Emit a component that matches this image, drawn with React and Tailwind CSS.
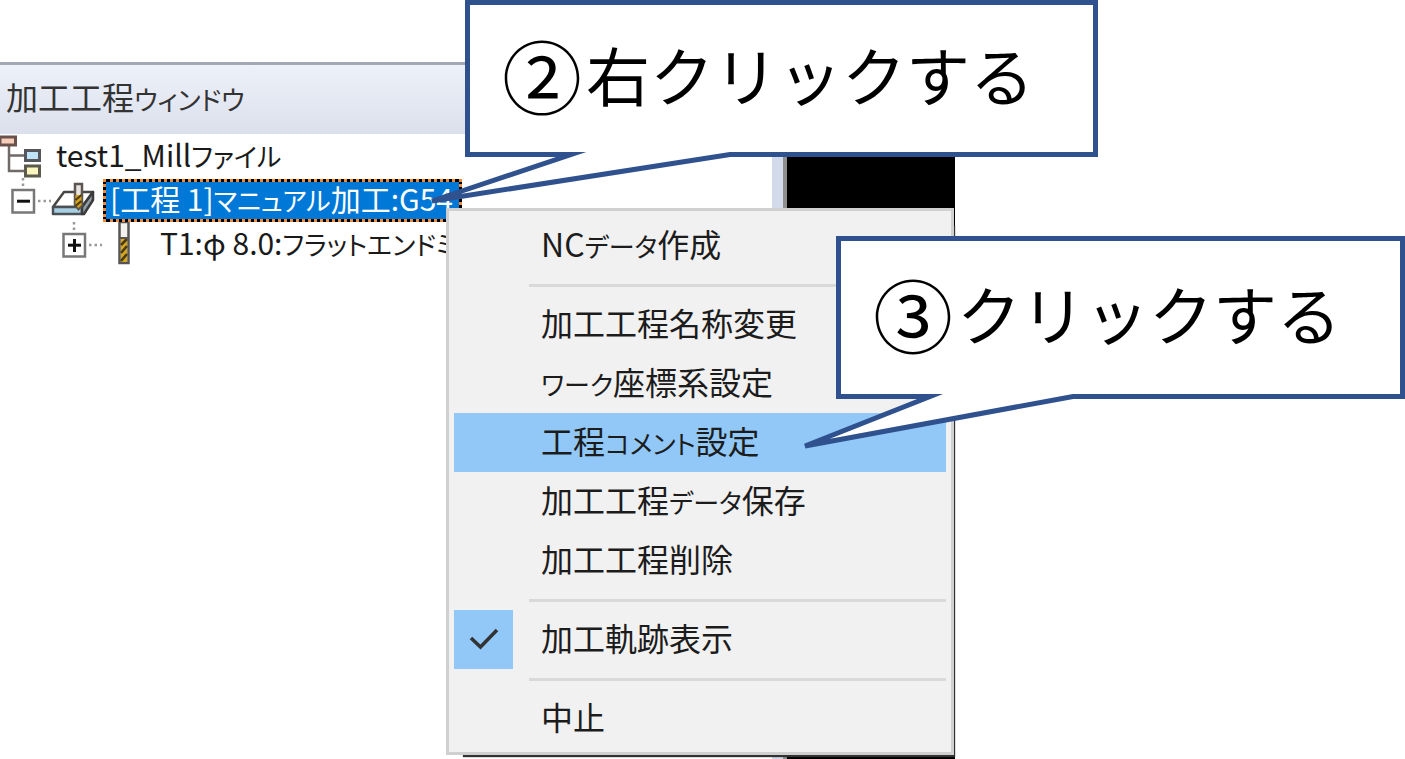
import React from 'react';

const menuGroups = [
  [{ label: 'NCデータ作成' }],
  [
    { label: '加工工程名称変更' },
    { label: 'ワーク座標系設定' },
    { label: '工程コメント設定', active: true },
    { label: '加工工程データ保存' },
    { label: '加工工程削除' },
  ],
  [{ label: '加工軌跡表示', checked: true }],
  [{ label: '中止' }],
];

// Katakana runs are set a little smaller than kanji, as in the Windows UI fonts
const Label = ({ children, kanaClass = 'text-[26px]' }) => (
  <span>
    {children.split(/([ァ-ヶー]+)/).map((run, index) =>
      index % 2 === 1 ? (
        <span key={index} className={kanaClass}>{run}</span>
      ) : (
        run
      )
    )}
  </span>
);

const ProjectIcon = () => (
  <svg className="w-[42px] h-11 shrink-0" viewBox="0 0 42 44" fill="none" aria-hidden="true">
    <path d="M9 12V37H26M9 21.5H26" stroke="#6f6a68" strokeWidth="2.5" />
    <rect x="0" y="3" width="15.5" height="8" fill="#f6cdbb" stroke="#6b514c" strokeWidth="3" />
    <rect x="25.5" y="16.5" width="14" height="10" fill="#bfe3f7" stroke="#56575c" strokeWidth="3" />
    <rect x="25.5" y="32" width="14" height="10" fill="#faf6bd" stroke="#5b5a4c" strokeWidth="3" />
  </svg>
);

const Expander = ({ open, label }) => (
  <button type="button" aria-label={label} className="w-10 h-11 shrink-0">
    <svg className="w-10 h-11" viewBox="0 0 40 44" fill="none" aria-hidden="true">
      <path d="M12 0V10" stroke="#999" strokeWidth="2.5" strokeDasharray="2.5 3" />
      <path d="M27 23H40" stroke="#999" strokeWidth="2.5" strokeDasharray="2.5 3" />
      <rect x="1.5" y="12" width="21.5" height="22.5" fill="#fff" stroke="#777" strokeWidth="2.5" />
      <path d="M6 23.2H19" stroke="#111" strokeWidth="3" />
      {!open && <path d="M12.5 17V30" stroke="#111" strokeWidth="3" />}
    </svg>
  </button>
);

const WorkpieceIcon = () => (
  <svg className="w-11 h-11 shrink-0" viewBox="0 0 44 44" fill="none" aria-hidden="true">
    <path d="M13 14H42L31 29H2Z" fill="#fff" stroke="#4a4644" strokeWidth="2.5" strokeLinejoin="round" />
    <path d="M2 29H31V36H2Z" fill="#a9cfe2" stroke="#4b5055" strokeWidth="2.5" strokeLinejoin="round" />
    <path d="M31 29L42 14V22L33 36H31Z" fill="#8d9da6" stroke="#3b3b3b" strokeWidth="2.5" strokeLinejoin="round" />
    <path d="M24 6H31V27L27.5 31L24 27Z" fill="#e7e4df" stroke="#5c5550" strokeWidth="2.5" />
    <path d="M24.5 17H30.5V27L27.5 30L24.5 27Z" fill="#d0a01e" />
    <path d="M24.5 22L30.5 17M24.5 28L30.5 23" stroke="#4d3b0b" strokeWidth="2" />
  </svg>
);

const EndMillIcon = () => (
  <svg className="w-4 h-11 shrink-0" viewBox="0 0 16 44" fill="none" aria-hidden="true">
    <rect x="3.5" y="0" width="9" height="41" fill="#f4f2ef" stroke="#555" strokeWidth="2.5" />
    <rect x="5" y="16" width="6" height="24" fill="#d6a61c" />
    <path d="M5 23L11 17M5 31L11 24M5 39L11 32" stroke="#4b3a08" strokeWidth="2.5" />
    <path d="M4 16H12" stroke="#555" strokeWidth="2" />
  </svg>
);

const ContextMenu = () => (
  <div
    role="menu"
    className="absolute left-[446px] top-[208px] w-[508px] border-[3px] border-[#d0d0d0] bg-[#f1f1f1] px-[5px] pt-[5px] pb-1 shadow-[9px_10px_1px_-8px_#333]"
  >
    {menuGroups.map((group, index) => (
      <div key={group[0].label} role="group">
        {index > 0 && (
          <div className="h-5 pl-[75px] flex items-center">
            <div className="h-[3px] w-full bg-[#d9d9d9]" />
          </div>
        )}
        {group.map((item) => (
          <button
            key={item.label}
            type="button"
            role={item.checked ? 'menuitemcheckbox' : 'menuitem'}
            aria-checked={item.checked}
            className={`flex h-[59px] w-full items-center text-left text-[32px] leading-none whitespace-nowrap text-[#1c1c1c] ${
              item.active ? 'bg-[#91c8f7]' : ''
            }`}
          >
            <span
              className={`mr-7 flex h-[59px] w-[59px] shrink-0 items-center justify-center ${
                item.checked ? 'bg-[#91c8f7]' : ''
              }`}
            >
              {item.checked && (
                <svg className="h-8 w-8" viewBox="0 0 32 32" fill="none" aria-hidden="true">
                  <path d="M3 14L12.5 23L29 6" stroke="#333" strokeWidth="3.5" />
                </svg>
              )}
            </span>
            <span className="pb-[6px]">
              <Label>{item.label}</Label>
            </span>
          </button>
        ))}
      </div>
    ))}
  </div>
);

const Callout = ({ number, text, className, children }) => (
  <div
    className={`absolute flex items-center gap-1 border-[5px] border-[#2f528f] bg-white pb-3 pl-8 whitespace-nowrap text-black [font-feature-settings:normal] ${className}`}
  >
    <span className="text-[80px] leading-none">{number}</span>
    <span className="text-[64px] leading-none">{text}</span>
    {children}
  </div>
);

const App = () => {
  return (
    <main className="relative min-h-screen overflow-hidden bg-white pt-[62px] font-['Noto_Sans_CJK_JP',sans-serif] [font-feature-settings:'palt']">
      {/* Application window */}
      <div className="flex w-[68%]">
        <section className="min-w-0 flex-1 overflow-hidden">
          <header className="flex h-[72px] items-center border-t-3 border-[#a4a8b4] bg-linear-to-b from-[#edf1f9] to-[#dce0ec] pb-2 pl-[6px]">
            <h1 className="text-[32px] leading-none font-normal whitespace-nowrap text-[#333]">
              <Label>加工工程ウィンドウ</Label>
            </h1>
          </header>
          <ul className="text-[30px] leading-none whitespace-nowrap text-[#1a1a1a]">
            <li className="flex h-11 items-center gap-[14px]">
              <ProjectIcon />
              <span className="pb-1">
                <Label>test1_Millファイル</Label>
              </span>
            </li>
            <li className="flex h-11 items-center pl-[11px]">
              <Expander open label="工程を折りたたむ" />
              <WorkpieceIcon />
              <span className="ml-2 bg-black">
                <span className="flex h-[43px] w-[359px] items-center border-[3px] border-dotted border-[#f08a3c] bg-[#0078d7] bg-clip-padding pb-1 pl-1 text-white">
                  <Label>[工程 1]マニュアル加工:G54</Label>
                </span>
              </span>
            </li>
            <li className="flex h-11 items-center pl-[62px]">
              <Expander label="工具を展開" />
              <span className="ml-[14px] flex items-center gap-7">
                <EndMillIcon />
                <span className="pb-1">
                  <Label>T1:φ 8.0:フラットエンドミル</Label>
                </span>
              </span>
            </li>
          </ul>
        </section>
        <div className="w-[15px] border-r-4 border-[#8f8f8f] bg-[#d3daea]" />
        <div className="min-h-[697px] w-[168px] bg-black" />
      </div>

      <ContextMenu />

      <Callout number="②" text="右クリックする" className="left-[465px] top-0 h-[157px] w-[633px]">
        <svg className="absolute -left-[45px] top-[140px] h-[70px] w-[360px]" viewBox="425 145 360 70" fill="none" aria-hidden="true">
          <path d="M571 150H730V154.5L432 201L571 154.5Z" fill="#fff" />
          <path d="M540 154.5H571L432 201L730 154.5H760" stroke="#2f528f" strokeWidth="5" strokeMiterlimit="8" />
        </svg>
      </Callout>

      <Callout number="③" text="クリックする" className="left-[836px] top-[236px] h-[163px] w-[569px]">
        <svg className="absolute -left-[41px] top-[149px] h-[70px] w-[340px]" viewBox="800 390 340 70" fill="none" aria-hidden="true">
          <path d="M930 392H1073V396.5L805 446L930 396.5Z" fill="#fff" />
          <path d="M900 396.5H930L805 446L1073 396.5H1100" stroke="#2f528f" strokeWidth="5" strokeMiterlimit="8" />
        </svg>
      </Callout>
    </main>
  );
};

export default App;
